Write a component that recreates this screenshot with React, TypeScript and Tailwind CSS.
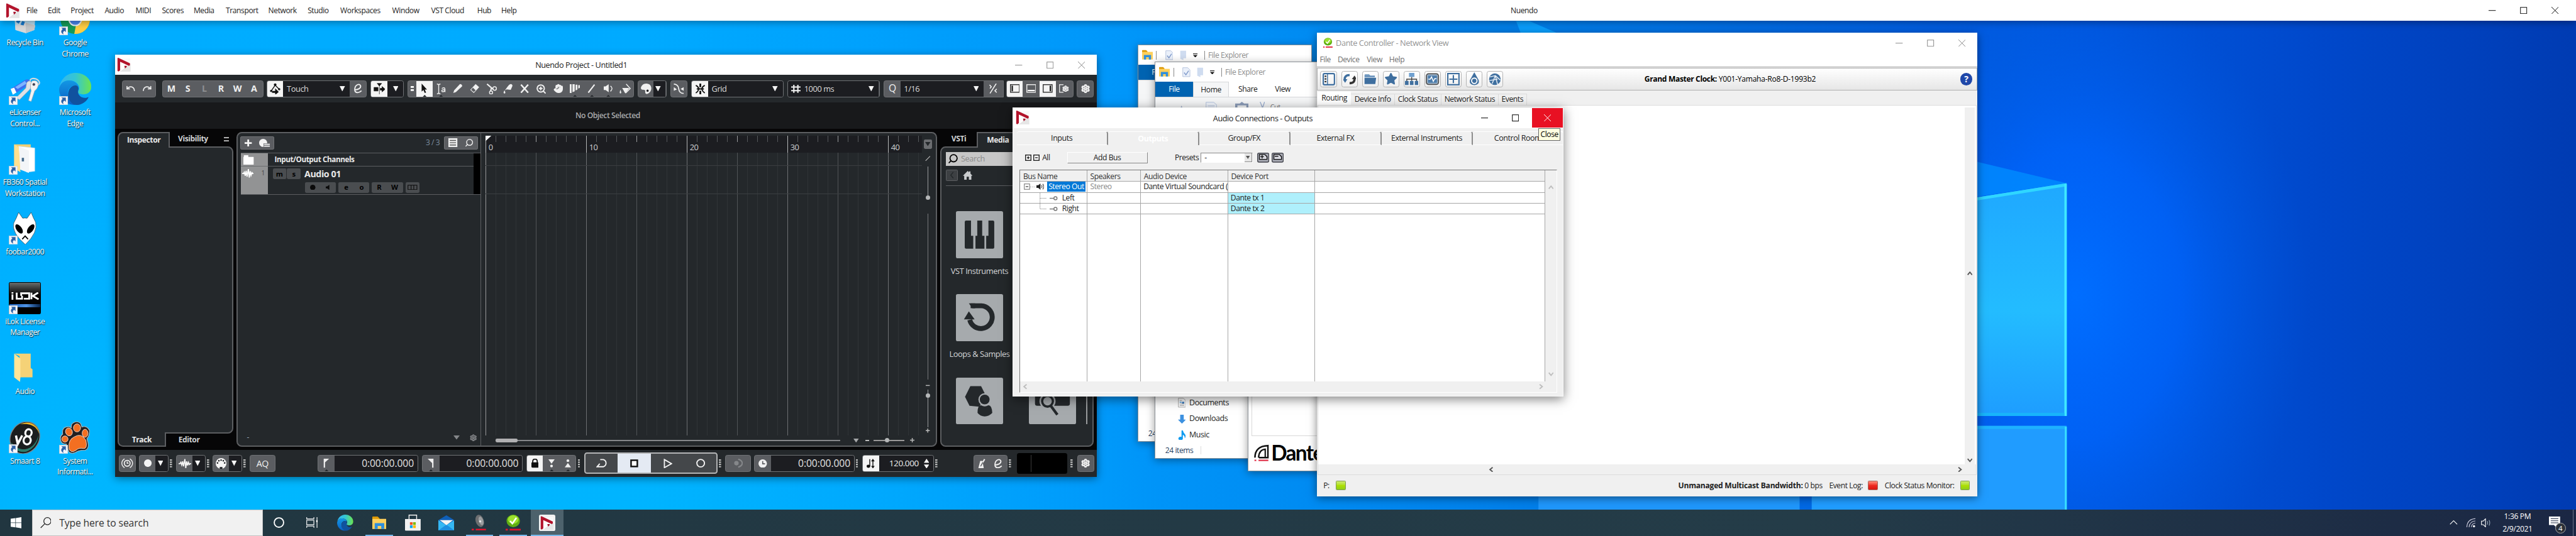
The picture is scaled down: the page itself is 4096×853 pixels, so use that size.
import React from "react";
import { Undo, Redo, Settings, Star, Search, Hand, ZoomIn } from "lucide-react";

type Kids = { children?: React.ReactNode };
type Cls = { className?: string };

/* ---------- shared ---------- */

function Svg({ w, h, vb, className, children }: { w: number; h?: number; vb?: string } & Cls & Kids) {
  return (
    <svg width={w} height={h ?? w} viewBox={vb ?? `0 0 ${w} ${h ?? w}`} className={`shrink-0 ${className ?? ""}`} fill="none">
      {children}
    </svg>
  );
}

function NuendoLogo({ w = 32, h = 34 }: { w?: number; h?: number }) {
  return (
    <Svg w={w} h={h} vb="0 0 32 34">
      <path d="M31 2 31 32 2 33 2 4Z" fill="#fafafa" />
      <path d="M30 2 23 11 31 17 31 33 8 33Z" fill="#dedede" />
      <path d="M31 18 31 33 6 33Z" fill="#e6e6e6" />
      <path d="M8 10 26 19 8 32Z" fill="#fff" />
      <path d="M1.2 2Q1.2 .6 3 .8L30 13.5V18L27.5 19.5 7.3 10V29.5L4 32.5 1.2 31.5Z" fill="#b3142c" />
      <path d="M17 19.5H22.5V22L18.5 25.5Z" fill="#a5142c" />
    </Svg>
  );
}

function WinControls({ color, className }: { color: string } & Cls) {
  return (
    <div className={`flex shrink-0 items-center gap-[54px] ${className ?? ""}`}>
      <Svg w={16}><path d="M0 8H16" stroke={color} strokeWidth="1.4" /></Svg>
      <Svg w={16}><rect x="1" y="1" width="14" height="14" stroke={color} strokeWidth="1.4" /></Svg>
      <Svg w={16}><path d="M0 0 16 16M16 0 0 16" stroke={color} strokeWidth="1.4" /></Svg>
    </div>
  );
}

/* ---------- wallpaper ---------- */

function Wallpaper() {
  return (
    <svg className="absolute inset-0" width="5760" height="1200" viewBox="0 0 5760 1200">
      <defs>
        <linearGradient id="sky" x1="0" x2="1" y1="0" y2="0">
          <stop offset="0" stopColor="#00aeff" />
          <stop offset=".25" stopColor="#00aaff" />
          <stop offset=".43" stopColor="#0097fa" />
          <stop offset=".6" stopColor="#007de8" />
          <stop offset=".75" stopColor="#005de0" />
          <stop offset=".82" stopColor="#0055dc" />
          <stop offset=".9" stopColor="#0048cb" />
          <stop offset="1" stopColor="#003bb2" />
        </linearGradient>
        <radialGradient id="glow" gradientUnits="userSpaceOnUse" cx="0" cy="0" r="1" gradientTransform="translate(4640 660) scale(520 720)">
          <stop offset="0" stopColor="#006eff" />
          <stop offset=".45" stopColor="#0064fb" stopOpacity=".8" />
          <stop offset="1" stopColor="#0058e0" stopOpacity="0" />
        </radialGradient>
        <linearGradient id="pane" x1="0" x2="0" y1="0" y2="1">
          <stop offset="0" stopColor="#1fa8ff" />
          <stop offset=".55" stopColor="#23bcff" />
          <stop offset="1" stopColor="#1e9dff" />
        </linearGradient>
        <radialGradient id="lowLeft" gradientUnits="userSpaceOnUse" cx="0" cy="0" r="1" gradientTransform="translate(700 1200) scale(1900 1100)">
          <stop offset="0" stopColor="#00b8ff" />
          <stop offset=".4" stopColor="#00b6ff" stopOpacity=".8" />
          <stop offset="1" stopColor="#00b0ff" stopOpacity="0" />
        </radialGradient>
      </defs>
      <rect width="5760" height="1200" fill="url(#sky)" />
      <rect width="2700" height="1200" fill="url(#lowLeft)" />
      <rect x="3900" y="0" width="1400" height="1200" fill="url(#glow)" />
      <path d="M3390 47H3420L3480 73H3400Z" fill="#0aa0ff" />
      <path d="M4421 362 4621 410 4421 440Z" fill="#008cff" opacity=".8" />
      <path d="M4051 500 4621 410V931H4051Z" fill="url(#pane)" />
      <path d="M4051 500 4621 410V417L4051 507Z" fill="#2fd6ff" />
      <path d="M4616 412H4621.500V931H4616Z" fill="#3fe8ff" />
      <path d="M4051 924H4616V931H4051Z" fill="#18b4fb" />
      <path d="M4051 953H4621V1200H4051Z" fill="#209cff" />
      <path d="M4051 953H4621V960H4051Z" fill="#1db1ff" />
      <path d="M4617 955H4621.500V1200H4617Z" fill="#38deff" />
      <path d="M3440 953H4024V1200H3440Z" fill="#1f96fb" />
    </svg>
  );
}

/* ---------- desktop icons ---------- */

function Shortcut() {
  return (
    <svg className="absolute bottom-0 left-0" width="20" height="20" viewBox="0 0 20 20">
      <rect x=".5" y=".5" width="19" height="19" fill="#f4f5f8" stroke="#c9cdd6" />
      <path d="M5 3H15V13L12 10C9 12 8 14 10 18 4 15 3 10 8 6Z" fill="#2c62a8" />
    </svg>
  );
}

function DeskIcon({ label, link, children }: { label: string[]; link?: boolean } & Kids) {
  return (
    <div className="flex h-[156px] w-[112px] flex-col items-center">
      <div className="relative h-[72px] w-[72px]">
        {children}
        {link && <Shortcut />}
      </div>
      <div className="mt-[4px] flex flex-col items-center leading-[25px] whitespace-nowrap text-white [text-shadow:1px_2px_2px_rgba(0,0,0,0.9)]">
        {label.map((l) => <span key={l}>{l}</span>)}
      </div>
    </div>
  );
}

function EdgeIcon({ s }: { s: number }) {
  return (
    <Svg w={s} vb="0 0 72 72">
      <defs>
        <linearGradient id="eg1" x1="0" x2="1"><stop offset="0" stopColor="#33b7f0" /><stop offset=".5" stopColor="#34c6d4" /><stop offset="1" stopColor="#6be44e" /></linearGradient>
        <linearGradient id="eg2" x1="0" x2="0" y1="0" y2="1"><stop offset="0" stopColor="#1397e4" /><stop offset="1" stopColor="#0a5fc4" /></linearGradient>
      </defs>
      <path d="M1 32C3 14 18 0 36 0 57 0 72 14 72 31 72 42 64 48 54 48 46 48 41 46 43 41 46 37 46 32 43 27 38 18 24 14 12 19 6 22 2 27 1 32Z" fill="url(#eg1)" />
      <path d="M0 36C2 24 11 17 22 17 33 17 42 23 44 33 36 24 24 29 20 40 17 52 24 66 38 71.500 16 74 0 56 0 36Z" fill="url(#eg2)" />
      <path d="M20 48C20 36 28 28 36 28 41 28 45 32 43 38 40 48 48 56 58 56 61 56 64 54 66 54 62 64 50 72 39 72 27 70 20 60 20 48Z" fill="#10529f" />
    </Svg>
  );
}

function DesktopIcons() {
  return (
    <div className="absolute top-[7px] left-0 flex">
      <div className="flex flex-col">
        <DeskIcon label={["Recycle Bin"]}>
          <Svg w={72}>
            <path d="M10 0H62L57 60 38 67 15 60Z" fill="#b8dcef" />
            <path d="M14 50 38 44 59 50 57 60 38 67 15 60Z" fill="#d8d8d8" />
            <path d="M38 44V67L57 60 59 50Z" fill="#c3c6c8" />
            <path d="M16 42 20 36 26 40 22 46ZM26 48 33 50 36 42 30 40Z" fill="#1678cc" />
          </Svg>
        </DeskIcon>
        <DeskIcon label={["eLicenser", "Control..."]} link>
          <Svg w={72}>
            <ellipse cx="58" cy="20" rx="11" ry="7" stroke="#d5d8dc" strokeWidth="3" transform="rotate(20 58 20)" />
            <path d="M4 36 36 16Q44 12 48 18L46 26 14 46Z" fill="#3c6ff0" />
            <path d="M14 32 36 18 40 24 20 36Z" fill="#7fb4ff" />
            <path d="M4 36 12 33 17 44 9 49Z" fill="#fff" />
            <path d="M40 22Q46 14 52 22L50 32 46 38 24 60 16 56 38 34Z" fill="#dfe2e6" stroke="#9aa0a8" />
            <path d="M52 18Q66 14 66 28 64 36 58 40L50 64 44 62 50 40Q46 28 52 18Z" fill="#f1f3f5" stroke="#9aa0a8" />
            <circle cx="56" cy="26" r="3" fill="#445" />
          </Svg>
        </DeskIcon>
        <DeskIcon label={["FB360 Spatial", "Workstation"]} link>
          <Svg w={72}>
            <path d="M12 4H49V60H12Z" fill="#f2cf73" />
            <path d="M22 8 58 12V64L40 66Z" fill="#fff" stroke="#c8dcec" />
            <path d="M22 8 45 18V68L25 60Z" fill="#f3f5f8" />
            <path d="M12 4 22 10 26 66 12 58Z" fill="#ffe08f" />
            <rect x="29" y="34" width="5" height="8" fill="#466a8a" />
          </Svg>
        </DeskIcon>
        <DeskIcon label={["foobar2000"]} link>
          <Svg w={72}>
            <path d="M22 0 31 13Q36 12 41 13L50 0Q55 13 60 22 66 44 37 72 6 46 11 24 17 13 22 0Z" fill="#fff" stroke="#26404e" strokeWidth="1" />
            <ellipse cx="23" cy="37" rx="6" ry="12" fill="#000" transform="rotate(-35 23 37)" />
            <ellipse cx="49" cy="37" rx="6" ry="12" fill="#000" transform="rotate(35 49 37)" />
            <path d="M30 60 36.500 53 43 60" stroke="#000" strokeWidth="2.500" />
          </Svg>
        </DeskIcon>
        <DeskIcon label={["iLok License", "Manager"]} link>
          <div className="flex h-[72px] w-[72px] flex-col rounded-[3px] border-2 border-black bg-linear-to-b from-[#6a6d6c] via-[#060606] via-40% to-black">
            <div className="mt-[22px] flex justify-center">
              <Svg w={62} h={17}>
                <path d="M2.500 5V17M2.500 0V3" stroke="#fff" strokeWidth="4" />
                <path d="M12 1V14.500H24V8M22 8V2.500H40V14.500H28M45 1V16M60 1 48 8.500 61 16" stroke="#fff" strokeWidth="4" />
              </Svg>
            </div>
            <div className="mt-[10px] h-[7px] bg-linear-to-r from-[#1a60c0] via-[#4f93e4] via-55% to-[#08264f]" />
          </div>
        </DeskIcon>
        <DeskIcon label={["Audio"]}>
          <Svg w={72}>
            <path d="M12 4H49V36L53 39V57H24V10Z" fill="#f5d277" />
            <path d="M12 4 26 15V57L25 67 12 57Z" fill="#ffe598" />
          </Svg>
        </DeskIcon>
        <DeskIcon label={["Smaart 8"]} link>
          <Svg w={72}>
            <ellipse cx="36" cy="36" rx="32" ry="37" fill="#1b1d1e" stroke="#7d868a" strokeWidth="2" transform="rotate(30 36 36)" />
            <path d="M26 6C44-4 66 6 68 28 66 20 58 2 26 6Z" fill="#f3b929" />
            <path d="M5 46C10 64 30 74 46 64 62 54 66 40 66 30 60 60 30 76 5 46Z" fill="#2b7c6c" />
            <path d="M16 31 20 50 30 31" stroke="#fff" strokeWidth="5" />
            <ellipse cx="44" cy="25" rx="7" ry="8" stroke="#fff" strokeWidth="4.500" transform="rotate(15 44 25)" />
            <ellipse cx="41" cy="42" rx="8" ry="9" stroke="#fff" strokeWidth="4.500" transform="rotate(15 41 42)" />
          </Svg>
        </DeskIcon>
      </div>
      <div className="flex flex-col">
        <DeskIcon label={["Google", "Chrome"]} link>
          <Svg w={72}>
            <circle cx="36" cy="36" r="33" fill="#159a58" />
            <path d="M40 36H69A33 33 0 0 1 34 69Z" fill="#ffce44" />
            <path d="M34 69 48 42H69Z" fill="#ffce44" />
            <circle cx="36" cy="36" r="15.500" fill="#eef2f6" />
            <circle cx="36" cy="36" r="12.500" fill="#4a86ee" />
          </Svg>
        </DeskIcon>
        <DeskIcon label={["Microsoft", "Edge"]} link><EdgeIcon s={72} /></DeskIcon>
        <div className="h-[624px]" />
        <DeskIcon label={["System", "Informati..."]} link>
          <Svg w={72}>
            <g fill="#231f20" stroke="#b5b8ba" strokeWidth="1.500">
              <path d="M28 6Q38-4 48 4L51 12Q62 8 68 20 68 32 62 38 70 60 58 64 48 64 42 66 30 74 22 68L16 50Q2 50 3 36 4 30 8 28 6 14 16 12 24 10 27 14Z" />
            </g>
            <g fill="#f36f21" stroke="#fff" strokeWidth="1">
              <ellipse cx="40" cy="14" rx="8" ry="9" />
              <ellipse cx="22" cy="23" rx="7.500" ry="9" transform="rotate(-20 22 23)" />
              <ellipse cx="58" cy="26" rx="6.500" ry="9" />
              <ellipse cx="13" cy="39" rx="7" ry="7" />
              <path d="M22 60Q20 40 34 34 50 24 60 42 64 62 54 60 44 58 38 64 26 72 22 60Z" />
            </g>
          </Svg>
        </DeskIcon>
      </div>
    </div>
  );
}

/* ---------- app menu bar ---------- */

const menu: [string, string][] = [
  ["File", "w-[48px]"], ["Edit", "w-[51px]"], ["Project", "w-[76px]"], ["Audio", "w-[69px]"], ["MIDI", "w-[59px]"],
  ["Scores", "w-[71px]"], ["Media", "w-[72px]"], ["Transport", "w-[95px]"], ["Network", "w-[88px]"], ["Studio", "w-[73px]"],
  ["Workspaces", "w-[116px]"], ["Window", "w-[87px]"], ["VST Cloud", "w-[103px]"], ["Hub", "w-[54px]"], ["Help", "w-[60px]"],
];

function MenuBar() {
  return (
    <div className="relative flex h-[47px] items-center bg-white text-[#222] shadow-[0_4px_16px_rgba(0,0,0,0.35)]">
      <div className="ml-[12px] w-[47px] pt-[2px]"><NuendoLogo /></div>
      {menu.map(([t, w]) => <span key={t} className={`${w} shrink-0 whitespace-nowrap`}>{t}</span>)}
      <span className="ml-[2197px]">Nuendo</span>
      <WinControls color="#111" className="mr-[39px] ml-auto" />
    </div>
  );
}

/* ---------- Nuendo project window ---------- */

function Group({ className, children }: Cls & Kids) {
  return (
    <div className={`flex h-[38px] shrink-0 items-stretch overflow-hidden rounded-[5px] border-2 border-[#6f7174] bg-[#5b5d61] text-[#f0f0f0] ${className ?? ""}`}>
      {children}
    </div>
  );
}

function Cell({ className, children }: Cls & Kids) {
  return <div className={`flex shrink-0 items-center justify-center ${className ?? ""}`}>{children}</div>;
}

function Drop({ label, className, children }: { label?: string } & Cls & Kids) {
  return (
    <div className={`flex shrink-0 items-center bg-[#1c1d21] text-[18px] text-[#dcdcdc] ${className ?? ""}`}>
      {children}
      {label && <span className="ml-[8px] whitespace-nowrap">{label}</span>}
      <Svg w={12} className="mr-[11px] ml-auto"><path d="M0 0H12L6 12Z" fill="#f4f4f4" /></Svg>
    </div>
  );
}

function ScriptE() {
  return <Svg w={20} h={22}><path d="M3 14C9 14 17 11 16 5 14-1 4 2 3 12 2 22 12 22 18 16" stroke="#f0f0f0" strokeWidth="2.600" /></Svg>;
}

function Grip({ className }: Cls) {
  return <Svg w={5} h={18} className={className}><path d="M2.500 0V18" stroke="#b9b9b9" strokeWidth="5" strokeDasharray="3 2" /></Svg>;
}

function Tool({ notch, active, children }: { notch?: boolean; active?: boolean } & Kids) {
  return (
    <div className={`relative flex w-[37.4px] shrink-0 items-center justify-center ${active ? "bg-[#f4f4f4]" : ""}`}>
      {children}
      {notch && <svg className="absolute bottom-[-2px] left-[13px]" width="12" height="6"><path d="M0 6 6 0 12 6Z" fill="#24282b" /></svg>}
    </div>
  );
}

function Toolbar() {
  return (
    <div className="flex h-[61px] items-center bg-[#24282b] pl-[16px]">
      <Group className="w-[76px]">
        <Cell className="w-[36px]"><Undo size={22} strokeWidth={2.600} /></Cell>
        <Cell className="w-[36px]"><Redo size={22} strokeWidth={2.600} /></Cell>
      </Group>
      <Group className="ml-[14px] w-[226px] text-[20px] font-bold">
        {["M", "S", "L", "R", "W", "A"].map((c) => <Cell key={c} className={c === "L" ? "w-[37px] text-[#8e9093]" : "w-[37px]"}>{c}</Cell>)}
      </Group>
      <Group className="ml-[7px] w-[224px]">
        <Cell className="w-[36px] bg-[#f4f4f4]">
          <Svg w={24} h={26}><path d="M3 18 12 5 21 14" stroke="#111" strokeWidth="2" /><circle cx="3" cy="18" r="2.500" fill="#111" /><circle cx="12" cy="4" r="3" fill="#111" /><circle cx="21" cy="14" r="2.500" fill="#111" /><path d="M5 18H12V12L20 20 12 27V22H5Z" fill="#111" /></Svg>
        </Cell>
        <Drop label="Touch" className="w-[149px]" />
        <Cell className="w-[35px]"><ScriptE /></Cell>
      </Group>
      <Group className="ml-[9px] w-[74px]">
        <Cell className="w-[36px] bg-[#f4f4f4]"><Svg w={26}><path d="M8 1H18L13 7ZM13 4V26M1 10H10V18H1ZM15 12H19V8L26 14 19 20V16H15Z" fill="#111" stroke="#111" strokeWidth="1" /></Svg></Cell>
        <Drop className="w-[35px]" />
      </Group>
      <Group className="ml-[9px] w-[506px]">
        <Cell className="w-[17px]"><Svg w={8} h={12}><path d="M0 2H8M0 9H8" stroke="#fff" strokeWidth="4" /></Svg></Cell>
        <Tool active notch><Svg w={16} h={22}><path d="M2 0V18L6 14.500 9 21 12 20 9 13.500H14Z" fill="#111" /></Svg></Tool>
        <Tool notch><Svg w={22} h={24}><path d="M1 1Q5 1 5 4V20Q5 23 1 23M9 1Q5 1 5 4M9 23Q5 23 5 20" stroke="#f0f0f0" strokeWidth="2" /><path d="M12 11Q19 7 19 13V19M19 14Q11 13 12 17 14 20 19 16" stroke="#f0f0f0" strokeWidth="2" /></Svg></Tool>
        <Tool><Svg w={22}><path d="M1 21 3 15 16 1Q21 1 21 6L7 19Z" fill="#f0f0f0" /></Svg></Tool>
        <Tool><Svg w={22}><path d="M13 1 21 8 9 21 1 14Z" fill="#f0f0f0" /><path d="M7 9 13 15 9 19 3 14Z" fill="#5b5d61" /></Svg></Tool>
        <Tool><Svg w={24}><path d="M2 1 16 13M12 9 10 17" stroke="#f0f0f0" strokeWidth="3" /><circle cx="19" cy="11" r="4" stroke="#f0f0f0" strokeWidth="2" /><circle cx="11" cy="20" r="3.500" stroke="#f0f0f0" strokeWidth="2" /></Svg></Tool>
        <Tool><Svg w={22}><path d="M13 3Q20-2 21 5L17 14 8 13 4 15 9 8ZM3 15Q7 22 3 22-1 22 3 15Z" fill="#f0f0f0" /></Svg></Tool>
        <Tool><Svg w={20}><path d="M2 1 18 19M18 1 2 19" stroke="#f0f0f0" strokeWidth="3.500" /></Svg></Tool>
        <Tool><ZoomIn size={24} strokeWidth={2.800} /></Tool>
        <Tool><Hand size={22} strokeWidth={2} fill="#f0f0f0" /></Tool>
        <Tool notch><Svg w={23} h={20}><path d="M0 0H4V20H0ZM6 0H11V16L6 18ZM13 1H17V12L13 14ZM19 2H23V8L19 10Z" fill="#f0f0f0" /></Svg></Tool>
        <Tool notch><Svg w={18} h={20}><path d="M2 19 16 1" stroke="#f0f0f0" strokeWidth="3" /></Svg></Tool>
        <Tool notch><Svg w={22} h={20}><path d="M0 5H4L11 0V18L4 13H0Z" fill="#f0f0f0" /><path d="M15 4Q22 9 15 16" stroke="#f0f0f0" strokeWidth="2" /></Svg></Tool>
        <Tool><Svg w={26} h={24}><path d="M6 10H22L13 22ZM2 14Q6 22 2 22-1 22 2 14Z" fill="#f0f0f0" /><path d="M15 1 24 11 14 21" stroke="#f0f0f0" strokeWidth="2" /></Svg></Tool>
      </Group>
      <Group className="ml-[8px] w-[65px] bg-[#1c1d21]">
        <Cell className="w-[34px]"><Svg w={24}><path d="M12 0C26 0 26 16 18 21 10 27 9 20 10 16 10 13 0 16 0 10 1 4 6 0 12 0Z" fill="#f0f0f0" /><circle cx="15" cy="16" r="2.500" fill="#1c1d21" /></Svg></Cell>
        <Drop className="w-[27px]" />
      </Group>
      <Group className="ml-[8px] w-[38px]">
        <Cell className="w-full"><Svg w={26} h={24}><path d="M2 1Q12 2 13 12T24 22" stroke="#f0f0f0" strokeWidth="2.500" /><path d="M2 8 9 13 2 16ZM24 8 17 12 24 16Z" fill="#f0f0f0" /></Svg></Cell>
      </Group>
      <Group className="ml-[9px] w-[207px]">
        <Cell className="w-[36px] bg-[#f4f4f4]"><Svg w={24}><path d="M10 0H14V8H10ZM10 16H14V24H10Z" fill="#111" /><path d="M2 4Q7 6 9 12 7 18 2 21M22 4Q17 6 15 12 17 18 22 21M4 12H20" stroke="#111" strokeWidth="2.600" /></Svg></Cell>
        <Drop label="Grid" className="w-[167px]" />
      </Group>
      <Group className="ml-[8px] w-[207px] bg-[#1c1d21]">
        <Drop label="1000 ms" className="w-[203px] pl-[7px]"><Svg w={21} h={18}><path d="M6 0V18M15 0V18M0 5H21M0 13H21" stroke="#f0f0f0" strokeWidth="3" /></Svg></Drop>
      </Group>
      <Group className="ml-[8px] w-[268px] rounded-r-none">
        <Cell className="w-[36px] text-[22px]">Q</Cell>
        <Drop label="1/16" className="w-[186px]" />
        <Cell className="w-[42px]"><Svg w={20} h={22}><path d="M3 22 17 0M2 3 6 7 3 11M18 12 14 16 18 20" stroke="#f0f0f0" strokeWidth="2.200" /></Svg></Cell>
      </Group>
      <Group className="ml-[6px] w-[151px]">
        <Cell className="w-[36px] bg-[#f4f4f4]"><Svg w={22} h={19}><rect x="1" y="1" width="20" height="17" stroke="#333" strokeWidth="2" /><path d="M5 3V16" stroke="#111" strokeWidth="3" /></Svg></Cell>
        <Cell className="w-[37px]"><Svg w={22} h={19}><rect x="1" y="1" width="20" height="17" stroke="#eee" strokeWidth="2" /><path d="M3 14H19" stroke="#fff" strokeWidth="3" /></Svg></Cell>
        <Cell className="w-[37px] bg-[#f4f4f4]"><Svg w={22} h={19}><rect x="1" y="1" width="20" height="17" stroke="#333" strokeWidth="2" /><path d="M17 3V16" stroke="#111" strokeWidth="3" /></Svg></Cell>
        <Cell className="w-[37px]"><Svg w={10} h={19}><path d="M10 1H1V18H10" stroke="#ddd" strokeWidth="2" /></Svg><Settings size={15} strokeWidth={4} className="-ml-[3px]" /></Cell>
      </Group>
      <Group className="ml-[7px] w-[38px]"><Cell className="w-full"><Settings size={20} strokeWidth={4} /></Cell></Group>
    </div>
  );
}

const line = "border-[#5c5e61]";

function Inspector() {
  return (
    <div className="ml-[6px] flex h-[705px] w-[259px] flex-col font-bold text-[#cfd1d3]">
      <div className="z-10 -mb-[3px] flex h-[36px]">
        <div className={`flex w-[117px] items-center justify-center rounded-tl-[12px] border-[3px] border-b-0 bg-[#24282b] text-[#e9e9e9] ${line}`}>Inspector</div>
        <div className="flex flex-1 items-center pb-[3px] pl-[18px]">Visibility
          <Svg w={12} h={10} className="ml-auto mr-[10px]"><path d="M0 1.500H12M0 8.500H12" stroke="#c8c8c8" strokeWidth="2.500" /></Svg>
        </div>
      </div>
      <div className={`flex-1 rounded-tr-[12px] rounded-br-[12px] border-[3px] bg-[#24282b] ${line}`} />
      <div className="z-10 -mt-[3px] flex h-[32px]">
        <div className={`flex w-[108px] items-center justify-center rounded-bl-[12px] border-[3px] border-t-0 bg-[#24282b] pt-[3px] text-[#e9e9e9] ${line}`}>Track</div>
        <div className="flex flex-1 items-center pt-[2px] pl-[28px]">Editor</div>
      </div>
    </div>
  );
}

function MiniBtn({ className, children }: Cls & Kids) {
  return <div className={`flex h-[24px] items-center justify-around rounded-[3px] bg-[#4a4d50] text-[16px] leading-none font-bold text-black ${className ?? ""}`}>{children}</div>;
}

function TrackList() {
  return (
    <div className="flex w-[544px] flex-col border-r-2 border-[#5c5e61] text-[#e9e9e9]">
      <div className="flex h-[44px] items-center pl-[6px]">
        <div className="flex h-[29px] w-[76px] items-center justify-around rounded-[3px] border-2 border-[#717376] bg-[#5b5d61]">
          <Svg w={16}><path d="M8 0V16M0 8H16" stroke="#f4f4f4" strokeWidth="4" /></Svg>
          <Svg w={24} h={18}><circle cx="9" cy="9" r="9" fill="#f4f4f4" /><path d="M10 10H24V18H10Z" fill="#5b5d61" /><path d="M11 12H24M11 16.500H24" stroke="#f4f4f4" strokeWidth="2.500" /></Svg>
        </div>
        <span className="ml-auto text-[#7d8ea0]">3 / 3</span>
        <div className="mr-[5px] ml-[10px] flex h-[29px] w-[76px] items-center justify-around rounded-[3px] border-2 border-[#717376] bg-[#5b5d61]">
          <Svg w={20}><rect width="20" height="20" fill="#f0f0f0" /><path d="M3 5H17M3 10H17M3 15H17" stroke="#555" strokeWidth="2" /></Svg>
          <Search size={20} strokeWidth={2.500} className="-scale-x-100" />
        </div>
      </div>
      <div className="ml-[7px] flex h-[94px] border-y-2 border-[#5c5e61]">
        <div className="flex w-[60px] flex-col bg-[#929394]">
          <div className="h-[29px] border-b-2 border-[#6c6e70] pt-[4px] pl-[6px]"><Svg w={23} h={21}><path d="M1 0H11V4H23V21H0V4H1Z" fill="#fff" /></Svg></div>
          <div className="flex items-center justify-between pt-[5px] pr-[7px] pl-[2px] text-[14px] text-[#444]">
            <Svg w={26} h={20}><path d="M0 10H3L5 7 7 15 9 4 11 17 14 0 16 19 18 5 20 14 22 8 24 10H26" stroke="#fff" strokeWidth="2.500" /></Svg>1
          </div>
        </div>
        <div className="flex flex-1 flex-col">
          <div className="flex h-[29px] items-center border-b-2 border-[#5c5e61] pl-[15px] text-[16.5px] font-bold">Input/Output Channels</div>
          <div className="flex items-center pt-[5px] pl-[11px]">
            <MiniBtn className="w-[31px] border-r border-[#2b2d2f]">m</MiniBtn>
            <MiniBtn className="w-[32px]">s</MiniBtn>
            <span className="ml-[8px] text-[20px] leading-[24px] font-bold">Audio 01</span>
          </div>
          <div className="mt-[6px] flex gap-[6px] pl-[83px]">
            <MiniBtn className="w-[69px]"><Svg w={12}><circle cx="6" cy="6" r="6" fill="#0a0a0a" /></Svg><Svg w={10} h={12}><path d="M0 4H3L8 0V12L3 8H0Z" fill="#0a0a0a" /></Svg></MiniBtn>
            <MiniBtn className="w-[69px]"><span>e</span><span>o</span></MiniBtn>
            <MiniBtn className="w-[69px]"><span>R</span><span>W</span></MiniBtn>
            <MiniBtn className="w-[31px]"><Svg w={22} h={12}><path d="M1 1H21V11H1ZM8 1V11M14 1V11" stroke="#0a0a0a" strokeWidth="1.500" /></Svg></MiniBtn>
          </div>
        </div>
        <div className="w-[16px] bg-black" />
      </div>
      <div className="mt-auto flex h-[36px] items-center gap-[22px] pr-[8px] pl-[20px] text-[#9aa6b4]">
        <span>-</span>
        <Svg w={14} h={10} className="ml-auto"><path d="M0 0H14L7 9Z" fill="#85878a" /></Svg>
        <Settings size={16} strokeWidth={3.500} className="text-[#85878a]" />
      </div>
    </div>
  );
}

const beats = Array.from({ length: 44 }, (_, i) => i);

function Arrangement() {
  return (
    <div className="flex flex-1 flex-col pl-[10px]">
      <div className="flex flex-1">
        <div className="flex w-[976px] flex-col pt-[6px]">
          <div className="relative flex h-[38px] overflow-hidden bg-[#1c1d21] text-[18px]">
            {beats.map((b) => (
              <div key={b} className={`flex w-[22.5px] shrink-0 items-end border-l-2 pl-[5px] leading-[24px] whitespace-nowrap text-[#cfd1d3] ${b % 10 === 0 ? "h-[38px] border-[#b5b7b8]" : b % 5 === 0 ? "h-[14px] border-[#9a9c9e]" : "h-[14px] border-[#55585b]"}`}>
                {b % 10 === 0 ? b : ""}
              </div>
            ))}
            <svg className="absolute top-0 left-0" width="13" height="12"><path d="M0 0H13L0 12Z" fill="#fff" /></svg>
          </div>
          <div className="relative flex flex-1 overflow-hidden">
            {beats.map((b) => (
              <div key={b} className={`w-[22.5px] shrink-0 border-l-2 ${b === 0 ? "border-[#98999a]" : b % 10 === 0 ? "border-[#6d6f72]" : b % 5 === 0 ? "border-[#515457]" : "border-[#303437]"}`} />
            ))}
            <div className="absolute top-[28px] left-0 h-[65px] w-full border-y-2 border-[#3b3e41]" />
          </div>
        </div>
        <div className="flex w-[26px] flex-col items-center pt-[15px]">
          <div className="flex h-[20px] w-[18px] items-center justify-center rounded-[3px] bg-[#6c6e71]"><Svg w={12} h={9}><path d="M0 0H12L6 9Z" fill="#24282b" /></Svg></div>
          <Svg w={12} className="mt-[16px]"><path d="M1 11 11 1" stroke="#bbb" strokeWidth="1.600" /></Svg>
          <div className="mt-[12px] h-[64px] w-[2px] bg-[#9a9c9e]" />
          <div className="h-[10px] w-[9px] rounded-full bg-[#b5b7b8]" />
          <div className="mt-[32px] h-[370px] w-[2px] bg-[#77797c]" />
          <Svg w={9} h={4} className="mt-[12px]"><path d="M0 2H9" stroke="#bbb" strokeWidth="2" /></Svg>
          <div className="mt-[7px] h-[8px] w-[2px] bg-[#9a9c9e]" />
          <div className="h-[10px] w-[9px] rounded-full bg-[#b5b7b8]" />
          <div className="h-[66px] w-[2px] bg-[#9a9c9e]" />
          <Svg w={9} className="mt-[4px]"><path d="M4.500 0V9M0 4.500H9" stroke="#bbb" strokeWidth="2" /></Svg>
        </div>
      </div>
      <div className="flex h-[23px] items-center pl-[23px]">
        <div className="h-[8px] w-[48px] rounded-[3px] bg-[#b0b0b2]" />
        <div className="h-[3px] w-[722px] bg-[#85878a]" />
        <Svg w={14} h={9} className="ml-[30px]"><path d="M0 0H12L6 9Z" fill="#a5a7a9" /></Svg>
        <div className="ml-[12px] h-[2px] w-[8px] bg-[#bbb]" />
        <div className="ml-[10px] h-[2px] w-[26px] bg-[#999]" />
        <div className="h-[10px] w-[10px] rounded-full bg-[#b5b7b8]" />
        <div className="h-[2px] w-[33px] bg-[#999]" />
        <Svg w={10} className="ml-[13px]"><path d="M5 0V10M0 5H10" stroke="#bbb" strokeWidth="2" /></Svg>
      </div>
    </div>
  );
}

function Tile({ label, children }: { label?: string } & Kids) {
  return (
    <div className="flex h-[186px] shrink-0 flex-col items-center">
      <div className="flex h-[105px] w-[105px] shrink-0 items-center justify-center rounded-[4px] bg-[#a6aaad]">{children}</div>
      {label && <span className="mt-[16px] text-[18px] whitespace-nowrap text-[#d5d7d9]">{label}</span>}
    </div>
  );
}

function MediaRack() {
  return (
    <div className="ml-[7px] flex h-[705px] w-[344px] flex-col font-bold text-[#cfd1d3]">
      <div className="z-10 -mb-[3px] flex h-[36px] shrink-0">
        <div className="flex w-[82px] items-center justify-center pb-[3px] pl-[2px]">VSTi</div>
        <div className={`flex flex-1 items-center rounded-tr-[12px] border-[3px] border-b-0 bg-[#24282b] pl-[20px] text-[#e9e9e9] ${line}`}>Media</div>
      </div>
      <div className={`flex h-[672px] shrink-0 flex-col overflow-hidden rounded-tl-[12px] rounded-b-[12px] border-[3px] bg-[#24282b] px-[10px] pt-[10px] font-normal ${line}`}>
        <div className="flex h-[30px] shrink-0 items-center bg-[#c7c7c7] pl-[5px] text-[18px] text-[#8a8a8a]">
          <Search size={24} strokeWidth={2.500} className="-scale-x-100 text-black" /><span className="ml-[5px]">Search</span>
        </div>
        <div className="flex h-[46px] shrink-0 items-center border-b-2 border-[#5c5e61] pb-[1px]">
          <div className="flex h-[26px] w-[27px] items-center justify-center rounded-[2px] border-2 border-[#5c5e61] bg-[#3d4043]"><Svg w={8} h={16}><path d="M7 1 1 8 7 15" stroke="#24282b" strokeWidth="2" /></Svg></div>
          <Svg w={22} h={20} className="ml-[11px]"><path d="M11 0 14 3V1H17V6L22 11H19V20H13.500V13H8.500V20H3V11H0Z" fill="#c9cbcd" /></Svg>
        </div>
        <div className="flex shrink-0 pt-[56px]">
          <div className="flex w-[151px] flex-col items-center">
            <Tile label="VST Instruments">
              <Svg w={66} h={63}><path d="M0 3Q0 0 3 0H14V34H19V63H3Q0 63 0 60ZM28 0H39V34H44V63H24V34H28ZM53 0H63Q66 0 66 3V60Q66 63 63 63H48V34H53Z" fill="#24282b" /></Svg>
            </Tile>
            <Tile label="Loops & Samples">
              <Svg w={72} h={66}><path d="M16 6.500H40A25.500 25.500 0 1 1 14 38" stroke="#24282b" strokeWidth="11" /><path d="M12 1H26V12H20ZM1 37 12 19 25 37Z" fill="#24282b" /></Svg>
            </Tile>
            <Tile>
              <Svg w={70} h={70}><path d="M14 2H38L48 22 34 48 12 46 2 26Z" fill="#24282b" /><circle cx="46" cy="32" r="14" fill="#a6aaad" /><circle cx="46" cy="32" r="11" fill="#24282b" /><path d="M30 62Q30 44 38 45 46 50 54 45 62 44 63 62 56 70 46 70 36 70 30 62Z" fill="#24282b" /></Svg>
            </Tile>
          </div>
          <div className="mt-[372px] ml-[35px] flex w-[105px] flex-col items-center">
            <Tile>
              <Svg w={80} h={70}><rect x="1" y="0" width="78" height="46" rx="5" fill="#24282b" /><circle cx="55" cy="18" r="4" fill="#a6aaad" /><circle cx="67" cy="18" r="4" fill="#a6aaad" /><circle cx="29" cy="36" r="18" fill="#a6aaad" /><circle cx="29" cy="36" r="12" stroke="#24282b" strokeWidth="5" /><path d="M37 47 51 66" stroke="#24282b" strokeWidth="6" /></Svg>
            </Tile>
          </div>
          <div className="ml-[23px] h-[477px] w-[2px] bg-[#9a9c9e]" />
        </div>
      </div>
    </div>
  );
}

function Time({ value = "0:00:00.000" }: { value?: string }) {
  return <div className="flex flex-1 items-center justify-end bg-[#1c1d21] pr-[8px] text-[22px] tracking-[-0.005em] text-[#e4e4e4]">{value}</div>;
}

function Clock({ s }: { s: number }) {
  return <Svg w={s} vb="0 0 20 20"><circle cx="10" cy="10" r="10" fill="#f0f0f0" /><path d="M10 4V10.500H15.500" stroke="#5b5d61" strokeWidth="2.400" /></Svg>;
}

function Transport() {
  const dark = "bg-[#1c1d21]";
  return (
    <div className="flex h-[60px] items-center bg-[#24282b] pl-[9px]">
      <Group className="w-[38px]"><Cell className="w-full"><Svg w={26}><circle cx="13" cy="13" r="6.500" stroke="#f0f0f0" strokeWidth="2.500" /><path d="M13 9V13H16M7 3Q1 7 1 13T7 23M19 3Q25 7 25 13T19 23" stroke="#f0f0f0" strokeWidth="2" /></Svg></Cell></Group>
      <Group className={`ml-[7px] w-[66px] ${dark}`}>
        <Cell className="w-[35px]"><Svg w={17}><circle cx="8.500" cy="8.500" r="8.500" fill="#f4f4f4" /></Svg></Cell><Drop className="w-[28px]" />
      </Group>
      <Grip className="ml-[3px]" />
      <Group className={`ml-[9px] w-[66px] ${dark}`}>
        <Cell className="w-[35px]"><Svg w={28} h={22}><path d="M0 11H3L5 8 7 14 9 6 11 17 14 1 16 21 18 6 20 15 22 8 24 13 26 11H28" stroke="#f4f4f4" strokeWidth="2.500" /></Svg></Cell><Drop className="w-[28px]" />
      </Group>
      <Grip className="ml-[3px]" />
      <Group className={`ml-[8px] w-[66px] ${dark}`}>
        <Cell className="w-[35px]"><Svg w={24} h={24}><circle cx="12" cy="12" r="12" fill="#f4f4f4" /><path d="M4 11h.1M7 6h.1M12 4.500h.1M17 6h.1M20 11h.1" stroke="#1c1d21" strokeWidth="3.500" strokeLinecap="round" /><path d="M9 20H15V24H9Z" fill="#1c1d21" /></Svg></Cell><Drop className="w-[28px]" />
      </Group>
      <Grip className="ml-[3px]" />
      <Group className="ml-[8px] w-[58px]"><Cell className="w-full text-[20px]">AQ</Cell></Group>

      <Group className="ml-[94px] w-[225px]"><Tool notch><Svg w={14} h={20}><path d="M1 0H13L4 8V20H1Z" fill="#f0f0f0" /></Svg></Tool><Time /></Group>
      <Group className="ml-[9px] w-[225px]"><Tool notch><Svg w={14} h={20}><path d="M0 0H13V20H10V10Z" fill="#f0f0f0" /></Svg></Tool><Time /></Group>
      <Group className="ml-[8px] w-[112px]">
        <Cell className="w-[36px] bg-[#f4f4f4]"><Svg w={16} h={20}><path d="M3 9V6Q3 1 8 1T13 6V9" stroke="#111" strokeWidth="2.500" /><rect y="8" width="16" height="12" rx="2" fill="#111" /></Svg></Cell>
        <Tool notch><Svg w={14} h={18}><path d="M0 0H14L7 10Z" fill="#f0f0f0" /><circle cx="7" cy="15" r="3" fill="#f0f0f0" /></Svg></Tool>
        <Tool notch><Svg w={14} h={18}><path d="M0 18H14L7 8Z" fill="#f0f0f0" /><circle cx="7" cy="3" r="3" fill="#f0f0f0" /></Svg></Tool>
      </Group>
      <Grip className="ml-[3px]" />
      <div className="ml-[9px] flex h-[48px] w-[299px] overflow-hidden rounded-[6px] border-[3px] border-[#b4b5b6] bg-[#44474a]">
        <Cell className="w-[72px]"><Svg w={24} h={20}><path d="M9 2H16Q22 4 22 10T16 18H2L8 11" stroke="#f4f4f4" strokeWidth="2.600" /></Svg></Cell>
        <Cell className="w-[75px] bg-[#e4eaf3]"><Svg w={18}><rect x="2" y="2" width="14" height="14" fill="#fff" stroke="#111" strokeWidth="3.500" /></Svg></Cell>
        <Cell className="w-[75px]"><Svg w={20} h={22}><path d="M2 2 18 11 2 20Z" stroke="#f4f4f4" strokeWidth="2.600" /></Svg></Cell>
        <Cell className="w-[71px]"><Svg w={20}><circle cx="10" cy="10" r="8.500" stroke="#f4f4f4" strokeWidth="2.600" /></Svg></Cell>
      </div>
      <Grip className="ml-[3px]" />
      <Group className="ml-[9px] w-[57px]"><Cell className="w-full"><Svg w={22} h={20}><circle cx="7" cy="10" r="5" fill="#85878a" /><path d="M11 1Q20 4 20 10T11 19" stroke="#85878a" strokeWidth="3" /></Svg></Cell></Group>
      <Group className="ml-[8px] w-[224px]"><Cell className="w-[36px]"><Clock s={19} /></Cell><Time /></Group>
      <Grip className="ml-[3px]" />
      <Group className="ml-[10px] w-[160px]">
        <Cell className="w-[36px] bg-[#f4f4f4]"><Svg w={20} h={22}><ellipse cx="4" cy="17" rx="4" ry="3.500" fill="#111" /><path d="M7 17V1M14 4V18" stroke="#111" strokeWidth="2" /><path d="M10 6 14 0 18 6ZM10 16 14 22 18 16Z" fill="#111" /></Svg></Cell>
        <div className="flex flex-1 items-center justify-end gap-[11px] bg-[#1c1d21] pr-[10px] text-[19px] tracking-[-0.03em]">120.000
          <Svg w={12} h={22}><path d="M0 9 6 0 12 9ZM0 13 6 22 12 13Z" fill="#f4f4f4" /></Svg>
        </div>
      </Group>
      <Grip className="ml-[3px]" />
      <Group className="ml-[80px] w-[76px]">
        <Cell className="w-[36px]"><Svg w={18} h={22}><path d="M1 21 5 5H10L13 21Z" fill="#f0f0f0" /><path d="M6 16 15 1" stroke="#f0f0f0" strokeWidth="3" /><path d="M6 17 11 8" stroke="#5b5d61" strokeWidth="2" /></Svg></Cell>
        <Cell className="w-[36px]"><ScriptE /></Cell>
      </Group>
      <Grip className="ml-[3px]" />
      <div className="ml-[13px] flex h-[46px] w-[113px] items-center rounded-[5px] bg-black pl-[31px]"><div className="h-[38px] w-[2px] bg-[#3a3a3a]" /></div>
      <Grip className="ml-[7px]" />
      <Group className="ml-[10px] w-[38px]"><Cell className="w-full"><Settings size={20} strokeWidth={4} /></Cell></Group>
    </div>
  );
}

function NuendoWindow() {
  return (
    <div className="absolute top-[123px] left-[257px] isolate flex h-[944px] w-[2196px] flex-col bg-[#060607] shadow-[0_4px_18px_rgba(0,0,0,0.45)]">
      <div className="flex h-[45px] items-center bg-white text-[#222]">
        <div className="w-[940px] pl-[5px]"><NuendoLogo w={31} h={34} /></div>
        <span className="text-[17.8px]">Nuendo Project - Untitled1</span>
        <WinControls color="#8a8a8a" className="mr-[27px] ml-auto" />
      </div>
      <Toolbar />
      <div className="flex h-[59px] items-center justify-center bg-[#18191b] pt-[2px] pl-[8px] text-[17px] font-semibold text-[#a9abad]">No Object Selected</div>
      <div className="flex flex-1 pt-[7px]">
        <Inspector />
        <div className={`ml-[7px] flex h-[705px] w-[1566px] rounded-[12px] border-[3px] bg-[#24282b] ${line}`}>
          <TrackList />
          <Arrangement />
        </div>
        <MediaRack />
      </div>
      <Transport />
    </div>
  );
}

/* ---------- file explorer windows ---------- */

function ExplorerFolder({ w = 24 }: { w?: number }) {
  return <Svg w={w} vb="0 0 24 22"><path d="M0 1Q0 0 1 0H9L12 3V6H0Z" fill="#dd9a07" /><path d="M0 4H24V21H0Z" fill="#ffd05c" /><path d="M4 21V11H20V21H15V16H9V21Z" fill="#2f8fdd" /></Svg>;
}

function ExplorerTitle() {
  return (
    <div className="flex h-[44px] items-center bg-white pl-[9px] text-[#8f8f8f]">
      <ExplorerFolder />
      <div className="ml-[7px] h-[20px] w-px bg-[#888]" />
      <Svg w={18} h={22} className="ml-[19px]"><path d="M1 1H12L17 6V21H1Z" fill="#eaf0fa" stroke="#9fb2d3" /><path d="M4 12 8 17 14 8" stroke="#7d98c9" strokeWidth="2" /></Svg>
      <Svg w={16} h={22} className="ml-[15px]"><path d="M1 1H14V18H8V22L1 19Z" fill="#cfdcf0" /></Svg>
      <Svg w={10} h={9} className="ml-[14px]"><path d="M0 1H10" stroke="#111" strokeWidth="1.600" /><path d="M0 4H10L5 9Z" fill="#111" /></Svg>
      <div className="ml-[15px] h-[20px] w-px bg-[#888]" />
      <span className="ml-[7px]">File Explorer</span>
    </div>
  );
}

function Explorers() {
  const win = "absolute flex flex-col border border-[#8a9096] bg-white shadow-[0_4px_18px_rgba(0,0,0,0.4)]";
  return (
    <>
      <div className={`${win} top-[100px] left-[2544px] h-[888px] w-[390px]`}>
        <ExplorerTitle />
        <div className="flex h-[34px] border-b border-[#d5d7d9]"><div className="flex w-[84px] items-center justify-center bg-[#0063b1] text-white">File</div></div>
        <div className="h-[140px] bg-[#f5f6f7]" />
        <div className="mt-auto flex h-[31px] items-center pl-[22px] text-[#264060]">24 items</div>
      </div>
      <div className={`${win} top-[138px] left-[2582px] h-[888px] w-[390px] text-[#222]`}>
        <ExplorerTitle />
        <div className="flex h-[34px] items-stretch border-b border-[#d5d7d9]">
          <div className="flex w-[84px] items-center justify-center bg-[#0063b1] text-white">File</div>
          <div className="-mb-px flex w-[81px] items-center justify-center border border-b-0 border-[#d5d7d9] bg-[#f5f6f7]">Home</div>
          <div className="flex w-[84px] items-center justify-center">Share</div>
          <div className="flex w-[72px] items-center justify-center">View</div>
        </div>
        <div className="flex h-[140px] items-start bg-[#f5f6f7] pt-[11px] text-[15px] text-[#777]">
          <Svg w={16} h={20} className="mt-[8px] ml-[51px]"><path d="M0 18 8 0 16 18Z" fill="#9fb0cc" /></Svg>
          <Svg w={26} h={20} className="ml-[45px]"><path d="M1 1H18L25 7V20H1Z" fill="#eef3fa" stroke="#9fb2d3" /><path d="M5 9H20M5 13H20" stroke="#9fb2d3" /></Svg>
          <Svg w={30} h={20} className="ml-[40px]"><path d="M0 4H10L15 0 20 4H30V20H0Z" fill="#8b9cb8" /><rect x="5" y="8" width="20" height="12" fill="#f5f6f7" /></Svg>
          <Svg w={12} h={20} className="ml-[25px]"><path d="M1 0 9 20M11 0 4 20" stroke="#9fb2d3" strokeWidth="2" /></Svg>
          <span className="ml-[12px]">Cut</span>
        </div>
        <div className="mt-auto flex flex-col pl-[50px] text-[17.5px]">
          <div className="flex h-[36px] items-center gap-[8px]"><Svg w={18} h={22}><path d="M1 1H12L17 6V21H1Z" fill="#fff" stroke="#888" /><path d="M4 6H9M4 14H14M4 17.500H14" stroke="#999" strokeWidth="1.300" /><path d="M9 9H14V13H9Z" fill="#3a7bbf" /><path d="M4 10H8" stroke="#2f8fdd" strokeWidth="2" /></Svg>Documents</div>
          <div className="flex h-[36px] items-center gap-[8px]"><Svg w={18} h={20}><path d="M5 0H13V11H18L9 20 0 11H5Z" fill="#3d91e0" /></Svg>Downloads</div>
          <div className="flex h-[36px] items-center gap-[8px]"><Svg w={18} h={22}><path d="M8 0H11Q12 5 16 9 19 13 15 18 16 12 11 10V18A5 4 0 1 1 8 14.500Z" fill="#0f9bf0" /></Svg>Music</div>
        </div>
        <div className="flex h-[33px] items-center pl-[22px] text-[#264060]">24 items<div className="ml-[17px] h-[18px] w-px bg-[#ddd]" /></div>
      </div>
      <div className={`${win} top-[700px] left-[2790px] h-[355px] w-[300px]`}>
        <div className="ml-[7px] h-[274px] border-b-2 border-l-2 border-[#d8d8d8]" />
        <div className="mt-[18px] ml-[13px] flex items-center">
          <Svg w={34} h={38}><path d="M2 30Q2 4 31 3V30H11" stroke="#111" strokeWidth="3.500" /><path d="M10 30Q11 12 25 11V29" stroke="#111" strokeWidth="3" /><path d="M1 36H5M10 36H32" stroke="#e0324a" strokeWidth="3" /></Svg>
          <span className="ml-[4px] font-[Lato] text-[47px] leading-[40px] font-bold tracking-[-0.05em] text-black">Dante</span>
        </div>
      </div>
    </>
  );
}

/* ---------- Dante Controller ---------- */

function DanteIcon({ w, h }: { w: number; h: number }) {
  return (
    <Svg w={w} h={h} vb="0 0 34 36">
      <ellipse cx="17" cy="14" rx="15" ry="14" fill="#5fae12" /><ellipse cx="17" cy="11" rx="12" ry="9.500" fill="#9ce02e" />
      <path d="M10 14 15 20 24 7" stroke="#fff" strokeWidth="3.500" /><path d="M0 33.500H5M9 33.500H34" stroke="#e0152d" strokeWidth="4" />
    </Svg>
  );
}

const blue = "#3f6f9f";

const danteTools: React.ReactNode[] = [
  <Svg w={28}><rect x="1.500" y="1.500" width="25" height="25" rx="3" stroke={blue} strokeWidth="3" /><path d="M11 2V26" stroke={blue} strokeWidth="2" /><path d="M6.500 6V22" stroke="#333" strokeWidth="4" strokeDasharray="3 3" /></Svg>,
  <Svg w={28}><path d="M3 16Q2 5 14 5" stroke={blue} strokeWidth="5" /><path d="M-2 14H9L4 22Z" fill={blue} /><path d="M25 12Q26 23 14 23" stroke="#333" strokeWidth="5" /><path d="M19 14H30L25 6Z" fill="#333" /></Svg>,
  <Svg w={28}><path d="M1 5Q1 3 3 3H11L14 6H24V10H1Z" fill="#6f97bf" /><path d="M1 11H27L25 25H1Z" fill={blue} /></Svg>,
  <Star size={30} fill={blue} color={blue} strokeWidth={1.500} />,
  <Svg w={30} h={28}><path d="M9 0H21V9H9Z" fill="#6fa0d0" /><path d="M15 9V18M4 19V14H26V19" stroke="#444" strokeWidth="2" /><path d="M0 18H8V27H0ZM11 18H19V27H11ZM22 18H30V27H22Z" fill={blue} /></Svg>,
  <Svg w={30} h={28}><rect x="1.500" y="2" width="27" height="24" rx="5" fill="#9fb6cc" stroke="#555" strokeWidth="2.500" /><path d="M5 6H25V22H5Z" fill="#4d7dac" /><path d="M6 14H10L13 9 17 19 20 13H24" stroke="#fff" strokeWidth="2" /></Svg>,
  <Svg w={28}><rect x="1.500" y="1.500" width="25" height="25" stroke={blue} strokeWidth="3" /><path d="M14 5V23M5 14H23" stroke={blue} strokeWidth="3" /></Svg>,
  <Svg w={26} h={30}><path d="M13 0 23 18Q25 28 13 29 1 28 3 18Z" fill={blue} /><circle cx="13" cy="19" r="6" stroke="#fff" strokeWidth="2.500" /></Svg>,
  <Svg w={28}><circle cx="14" cy="14" r="13" fill={blue} /><path d="M3 9 15 6 20 26M15 6 26 16M8 24 15 6M2 17 20 14" stroke="#e6eef6" strokeWidth="2" /></Svg>,
];

const danteTabs: [string, string][] = [["Device Info", "w-[98px]"], ["Clock Status", "w-[104px]"], ["Network Status", "w-[128px]"], ["Events", "w-[63px]"]];

function Chevron({ d, color = "#555" }: { d: string; color?: string }) {
  return <Svg w={12}><path d={d} stroke={color} strokeWidth="2.600" /></Svg>;
}
const UP = "M1 9 6 3 11 9";
const DOWN = "M1 3 6 9 11 3";
const LEFT = "M9 1 3 6 9 11";
const RIGHT = "M3 1 9 6 3 11";

function Led({ red }: { red?: boolean }) {
  return <div className={`h-[21px] w-[22px] shrink-0 rounded-[2px] border-2 ${red ? "border-[#a06a60] bg-linear-to-b from-[#ff8a7a] via-[#ee2a22] to-[#d8150f]" : "border-[#7f9a58] bg-linear-to-b from-[#cdea6a] via-[#aee000] to-[#8fce18]"}`} />;
}

function DanteController() {
  return (
    <div className="absolute top-[73px] left-[2945px] flex h-[1038px] w-[1476px] flex-col bg-[#f0f0f0] text-[#222] shadow-[0_4px_18px_rgba(0,0,0,0.5)]">
      <div className="flex h-[46px] items-center bg-white text-[#949494]">
        <div className="ml-[14px] w-[28px]"><DanteIcon w={21} h={23} /></div>
        <span className="text-[18px]">Dante Controller - Network View</span>
        <WinControls color="#8a8a8a" className="mr-[26px] ml-auto" />
      </div>
      <div className="flex h-[30px] items-center bg-white pl-[6px] text-[#707070]">
        <span className="w-[40px]">File</span><span className="w-[65px]">Device</span><span className="w-[50px]">View</span><span>Help</span>
      </div>
      <div className="h-[3px] border-t-2 border-[#a8a8a8]" />
      <div className="flex h-[50px] items-center border-2 border-[#b0b0b0] bg-linear-to-b from-white to-[#e6e6e6]">
        <div className="ml-[6px] flex gap-[9.5px]">
          {danteTools.map((t, i) => (
            <div key={i} className="flex h-[37px] w-[37px] items-center justify-center overflow-hidden rounded-[5px] border-2 border-[#b4b4b4] bg-linear-to-b from-white to-[#efefef]">{t}</div>
          ))}
        </div>
        <span className="ml-[316px] tracking-[-0.022em] text-black"><b className="tracking-[-0.03em]">Grand Master Clock:</b> Y001-Yamaha-Ro8-D-1993b2</span>
        <div className="mr-[9px] ml-auto flex h-[28px] w-[28px] items-center justify-center rounded-full bg-[#1f47a8] text-[20px] font-bold text-white">?</div>
      </div>
      <div className="flex h-[33px] items-end">
        <div className="ml-px flex h-[29px] w-[75px] items-center justify-center bg-white pb-[2px]">Routing</div>
        {danteTabs.map(([t, w]) => <div key={t} className={`${w} flex h-[26px] items-center justify-center border-t border-r border-[#dcdcdc] tracking-[-0.035em] whitespace-nowrap`}>{t}</div>)}
      </div>
      <div className="mx-px flex h-[828px] flex-col border border-[#dcdcdc] bg-white pt-[4px]">
        <div className="flex flex-1">
          <div className="flex-1" />
          <div className="mr-[3px] flex w-[22px] flex-col items-center bg-[#f0f0f0] pt-[366px] pb-[4px]">
            <Chevron d={UP} /><div className="flex-1" /><Chevron d={DOWN} />
          </div>
        </div>
        <div className="flex h-[22px] items-center bg-[#f0f0f0] pr-[30px] pl-[381px]"><Chevron d={LEFT} /><div className="flex-1" /><Chevron d={RIGHT} /></div>
      </div>
      <div className="flex flex-1 items-center pl-[14px] text-[17px] tracking-[-0.035em]">
        <span className="w-[28px]">P:</span><Led />
        <span className="ml-auto"><b className="tracking-[-0.02em]">Unmanaged Multicast Bandwidth:</b> 0 bps</span>
        <span className="mr-[12px] ml-[15px]">Event Log:</span><Led red />
        <span className="mr-[13px] ml-[15px]">Clock Status Monitor:</span><Led />
        <div className="w-[16px]" />
      </div>
    </div>
  );
}

/* ---------- Audio Connections ---------- */

const cols = ["w-[150px]", "w-[120px]", "w-[195px]", "w-[195px]", "w-[514px]"];
const heads = ["Bus Name", "Speakers", "Audio Device", "Device Port", ""];

function Plug() {
  return <Svg w={18} h={10}><path d="M0 5H9" stroke="#777" strokeWidth="2" /><circle cx="13" cy="5" r="3.500" stroke="#777" strokeWidth="2" /></Svg>;
}

function Branch({ last }: { last?: boolean }) {
  return <Svg w={16} h={24}><path d={last ? "M1 0V12H16" : "M1 0V24M1 12H16"} stroke="#999" strokeWidth="1.500" strokeDasharray="2 1" /></Svg>;
}

function Row({ cells, height = "h-[24px]" }: { cells: React.ReactNode[]; height?: string }) {
  return (
    <div className={`flex shrink-0 border-b-2 border-[#a6a6a6] ${height}`}>
      {cells.map((c, i) => <div key={i} className={`${cols[i]} flex shrink-0 items-center overflow-hidden border-r-2 border-[#a6a6a6] whitespace-nowrap`}>{c}</div>)}
    </div>
  );
}

function BoxSign({ plus }: { plus?: boolean }) {
  return <Svg w={14}><rect x="1" y="1" width="12" height="12" fill="#fff" stroke="#222" strokeWidth="2" /><path d={plus ? "M4 7H10M7 4V10" : "M4 7H10"} stroke="#222" strokeWidth="2" /></Svg>;
}

function PresetBtn({ plus }: { plus?: boolean }) {
  return <Svg w={27} h={22}><rect x="1" y="1" width="25" height="20" rx="3" fill="#a9abb5" stroke="#44464e" strokeWidth="2" /><path d="M5 4H17L22 9V15H5Z" fill="#d9dae2" stroke="#111" strokeWidth="2" /><path d={plus ? "M7 9H15M11 5V13" : "M7 8H15"} stroke="#111" strokeWidth="2" /></Svg>;
}

const tabs = ["Inputs", "Outputs", "Group/FX", "External FX", "External Instruments", "Control Room"];

function AudioConnections() {
  return (
    <div className="absolute top-[240px] left-[2264px] flex h-[648px] w-[1232px] flex-col border border-[#fafafa] bg-[#f0f0f0] text-[#222] shadow-[0_6px_24px_rgba(0,0,0,0.5)]">
      <div className="flex h-[46px] shrink-0 items-start bg-white">
        <div className="w-[447px] pt-[5px] pl-[5px]"><NuendoLogo w={31} h={34} /></div>
        <span className="self-center pt-[2px] text-[17.8px]">Audio Connections - Outputs</span>
        <div className="ml-auto flex">
          <Svg w={16} className="mt-[15px] mr-[53px]"><path d="M0 8H16" stroke="#111" strokeWidth="1.500" /></Svg>
          <Svg w={16} className="mt-[15px] mr-[29px]"><rect x="1" y="1" width="14" height="14" stroke="#111" strokeWidth="1.500" /></Svg>
          <div className="flex h-[44px] w-[69px] items-center justify-center bg-[#e81123]"><Svg w={16}><path d="M0 0 16 16M16 0 0 16" stroke="#fff" strokeWidth="1.400" /></Svg></div>
        </div>
      </div>
      <div className="mt-[7px] ml-[8px] flex h-[31px] shrink-0 overflow-hidden text-[17.5px]">
        {tabs.map((t) => t === "Outputs"
          ? <div key={t} className="flex w-[204px] shrink-0 items-center justify-center rounded-t-[5px] border-t-2 border-r-[3px] border-white border-r-[#8c8c8c] font-bold text-white">{t}</div>
          : <div key={t} className="flex w-[204px] shrink-0 items-center justify-center rounded-t-[5px] border-t-2 border-r-[3px] border-b-2 border-white border-r-[#8c8c8c] whitespace-nowrap last:border-r-white">{t}</div>)}
      </div>
      <div className="flex h-[55px] shrink-0 items-center pl-[27px]">
        <BoxSign plus /><div className="w-[4px]" /><BoxSign /><span className="ml-[6px]">All</span>
        <div className="ml-[38px] flex h-[26px] w-[180px] items-center justify-center border-2 border-white border-r-[#888] border-b-[#888]">Add Bus</div>
        <span className="ml-[61px] w-[57px] tracking-[-0.04em]">Presets</span>
        <div className="flex h-[23px] w-[117px] items-center justify-between border-2 border-[#8a8a8a] border-r-white border-b-white bg-white pl-[8px]">
          <span>-</span>
          <div className="flex h-full w-[17px] items-center justify-center border-r-2 border-b-2 border-[#8a8a8a] bg-[#e6e6e6]"><Svg w={9} h={7}><path d="M0 0H9L4.500 7Z" fill="#555" /></Svg></div>
        </div>
        <div className="ml-[10px] flex gap-[5px]"><PresetBtn plus /><PresetBtn /></div>
      </div>
      <div className="ml-[14px] flex h-[499px] w-[1203px] shrink-0 flex-col border-2 border-[#777] border-r-white border-b-white">
        <div className="flex h-[472px] shrink-0">
          <div className="relative flex w-[1174px] flex-col overflow-hidden bg-white">
            <div className="flex h-[24px] shrink-0 border-b-2 border-[#a6a6a6] bg-[#f0f0f0]">
              {heads.map((h, i) => <div key={i} className={`${cols[i]} flex shrink-0 items-center border-r-2 border-[#a6a6a6] pt-[3px] pl-[7px] text-[#333]`}>{h}</div>)}
            </div>
            <Row height="h-[26px]" cells={[
              <>
                <Svg w={14} className="ml-[8px]"><rect x="1" y="1" width="12" height="12" fill="#fff" stroke="#777" strokeWidth="1.500" /><path d="M4 7H10" stroke="#222" strokeWidth="1.500" /></Svg>
                <Svg w={10} h={2} className="mr-[4px]"><path d="M0 1H10" stroke="#888" strokeWidth="1.500" strokeDasharray="2 2" /></Svg>
                <Svg w={18} h={14}><path d="M0 4H4L9 0V14L4 10H0Z" fill="#222" /><path d="M11 4Q14 7 11 10M14 1Q19 7 14 13" stroke="#666" strokeWidth="2" /></Svg>
                <div className="ml-[6px] flex h-[22px] w-[87px] items-center justify-center bg-[#0078d7] text-white">Stereo Out</div>
              </>,
              <span className="pl-[7px] text-[#888]">Stereo</span>,
              <span className="pl-[6px]">Dante Virtual Soundcard (</span>, "", ""]} />
            <Row cells={[<div className="flex items-center pl-[44px]"><Branch /><div className="w-[6px]" /><Plug /><span className="ml-[10px]">Left</span></div>, "", "", <div className="h-full w-full bg-[#aff0fc] pl-[6px] leading-[23px]">Dante tx 1</div>, ""]} />
            <Row cells={[<div className="flex items-center pl-[44px]"><Branch last /><div className="w-[6px]" /><Plug /><span className="ml-[10px]">Right</span></div>, "", "", <div className="h-full w-full bg-[#aff0fc] pl-[6px] leading-[23px]">Dante tx 2</div>, ""]} />
            <div className="flex flex-1">{cols.map((c, i) => <div key={i} className={`${c} shrink-0 border-r-2 border-[#a6a6a6]`} />)}</div>
          </div>
          <div className="flex flex-1 flex-col items-center justify-between pt-[32px] pb-[10px]"><Chevron d={UP} color="#bdbdbd" /><Chevron d={DOWN} color="#bdbdbd" /></div>
        </div>
        <div className="flex flex-1 items-center justify-between pr-[30px] pl-[6px]"><Chevron d={LEFT} color="#bdbdbd" /><Chevron d={RIGHT} color="#bdbdbd" /></div>
      </div>
      <div className="absolute top-[45px] right-[5px] flex h-[29px] w-[50px] items-center justify-center border-2 border-[#666] bg-[#ffffe1] text-[17px] text-black">Close</div>
    </div>
  );
}

/* ---------- taskbar ---------- */

function Task({ w, bar, active, children }: { w: string; bar?: boolean; active?: boolean } & Kids) {
  return (
    <div className={`flex h-full shrink-0 flex-col items-center ${w} ${active ? "bg-[#4d626c]" : ""}`}>
      <div className="flex flex-1 items-center">{children}</div>
      {bar && <div className={`-mt-[3px] h-[3px] bg-[#76b9ed] ${active ? "w-full" : "w-[61px]"}`} />}
    </div>
  );
}

function Taskbar() {
  return (
    <div className="absolute bottom-0 left-0 flex h-[60px] w-[5760px] items-center bg-linear-to-r from-[#213640] via-[#243c48] via-70% to-[#1b2744]">
      <div className="flex w-[72px] items-center justify-center"><Svg w={25}><path d="M0 3.500 10.500 2V12H0ZM11.500 2 25 0V12H11.500ZM0 13H10.500V23L0 21.500ZM11.500 13H25V25L11.500 23Z" fill="#fff" /></Svg></div>
      <div className="flex h-full w-[516px] items-center border-2 border-[#c4c4c4] bg-[#f1f1f1] text-[22px] text-[#333]">
        <Svg w={25} className="ml-[16px]"><circle cx="16" cy="9" r="8" stroke="#222" strokeWidth="1.800" /><path d="M10 15 1 24" stroke="#222" strokeWidth="1.800" /></Svg>
        <span className="ml-[18px] pt-[2px] tracking-[-0.005em] whitespace-nowrap">Type here to search</span>
      </div>
      <Task w="w-[72px]"><Svg w={24}><circle cx="12" cy="12" r="10.500" stroke="#fff" strokeWidth="2.600" /></Svg></Task>
      <Task w="w-[75px]"><Svg w={26} h={24}><path d="M1 0V4H17V0M1 24V20H17V24M1 7H17V17H1ZM24 0V24" stroke="#fff" strokeWidth="1.600" /><path d="M24 7V11" stroke="#fff" strokeWidth="3.500" /></Svg></Task>
      <Task w="w-[75px]"><EdgeIcon s={36} /></Task>
      <Task w="w-[76px]" bar><ExplorerFolder w={32} /></Task>
      <Task w="w-[74px]">
        <Svg w={35} h={36}><path d="M9 11V1H26V11" stroke="#f2f2f2" strokeWidth="2" /><path d="M0 10H35V34Q35 36 33 36H2Q0 36 0 34Z" fill="#f2f2f2" /><path d="M11 17H17V23H11Z" fill="#f25022" /><path d="M18 17H24V23H18Z" fill="#7fba00" /><path d="M11 24H17V30H11Z" fill="#00a4ef" /><path d="M18 24H24V30H18Z" fill="#ffb900" /></Svg>
      </Task>
      <Task w="w-[76px]"><Svg w={36} h={34}><path d="M0 11 18 0 36 11V34H0Z" fill="#0f5fb8" /><path d="M0 11 18 22 36 11V34H0Z" fill="#35b8f4" /><path d="M0 34 18 21 36 34Z" fill="#1c8fe0" /><path d="M3 11H33L18 22Z" fill="#f4f4f4" /></Svg></Task>
      <Task w="w-[72px]" bar><Svg w={34} h={36}><ellipse cx="18" cy="14" rx="9" ry="14" fill="#6d6f71" transform="rotate(-18 18 14)" /><ellipse cx="21" cy="14" rx="5" ry="10" fill="#9c9ea0" transform="rotate(-18 21 14)" /><circle cx="19" cy="15" r="2.500" fill="#e6e6e6" /><path d="M0 33.500H5M9 33.500H32" stroke="#e0152d" strokeWidth="3.500" /></Svg></Task>
      <Task w="w-[79px]" bar><DanteIcon w={34} h={36} /></Task>
      <Task w="w-[73px]" bar active><div className="flex h-[36px] w-[36px] items-center justify-center rounded-[4px] bg-[#f2f2f2]"><NuendoLogo w={30} h={32} /></div></Task>
      <div className="ml-auto flex items-center text-white">
        <Svg w={18} h={10}><path d="M1 9 9 1 17 9" stroke="#fff" strokeWidth="1.600" /></Svg>
        <Svg w={22} className="ml-[19px]"><path d="M2 21Q3 3 21 2M7 21Q8 8 21 7M12 21Q13 13 21 12" stroke="#ccd" strokeWidth="1.600" /><circle cx="18" cy="19" r="2.500" fill="#fff" /></Svg>
        <Svg w={24} h={20} className="ml-[12px]"><path d="M1 6H5L10 1V19L5 14H1Z" stroke="#fff" strokeWidth="1.600" /><path d="M14 6Q16 10 14 14M18 4Q21 10 18 16" stroke="#9ab" strokeWidth="1.600" /></Svg>
        <div className="ml-[15px] flex w-[84px] flex-col items-center leading-[28px] tracking-[-0.03em]"><span>1:36 PM</span><span>2/9/2021</span></div>
        <div className="relative ml-[28px] h-[40px] w-[40px]">
          <Svg w={26} h={26} className="mt-[6px]"><path d="M0 0H25V19H17V25L11 19H0Z" fill="#fff" /><path d="M4 5H21M4 9.500H21M4 14H21" stroke="#1f2b45" strokeWidth="1.500" /></Svg>
          <div className="absolute right-[2px] bottom-[-4px] flex h-[24px] w-[24px] items-center justify-center rounded-full border border-[#aaa] bg-[#2b3038] text-[16px]">4</div>
        </div>
        <div className="mr-[6px] ml-[14px] h-[60px] w-px bg-[#6b7488]" />
      </div>
    </div>
  );
}

export default function App() {
  return (
    <div className="relative h-[1200px] w-[5760px] overflow-hidden font-['Open_Sans','Noto_Sans',sans-serif] text-[17px] leading-normal tracking-[-0.035em] [zoom:0.7111111]">
      <Wallpaper />
      <DesktopIcons />
      <MenuBar />
      <NuendoWindow />
      <Explorers />
      <DanteController />
      <AudioConnections />
      <Taskbar />
    </div>
  );
}
